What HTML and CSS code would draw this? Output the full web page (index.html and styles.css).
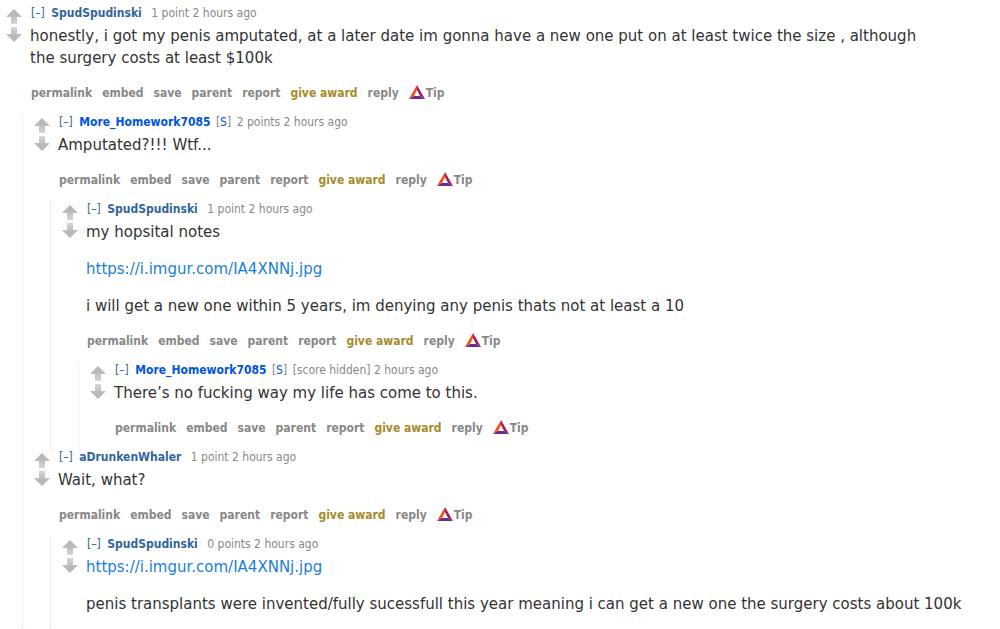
FILE: index.html
```html
<!DOCTYPE html>
<html lang="en">
<head>
    <meta charset="UTF-8">
    <meta name="viewport" content="width=device-width, initial-scale=1.0">
    <title>Comments</title>
    <link rel="stylesheet" href="styles.css">
</head>
<body>
    <svg class="defs" aria-hidden="true">
        <linearGradient id="arrow-fade" x1="0" y1="0" x2="0" y2="1">
            <stop offset="0.4" stop-color="#b8b8b8"/>
            <stop offset="1" stop-color="#d6d6d6"/>
        </linearGradient>
        <symbol id="arrow" viewBox="0 0 16 15">
            <path d="M8 0L16 8H11V15H5V8H0Z" fill="url(#arrow-fade)"/>
        </symbol>
        <symbol id="bat" viewBox="0 0 16 14">
            <path d="M8 0L0 14L5 11L8 5Z" fill="#ff4d0d"/>
            <path d="M8 0L16 14L11 11L8 5Z" fill="#9e1f63"/>
            <path d="M0 14H16L11 11H5Z" fill="#662d91"/>
        </symbol>
    </svg>

    <main class="comments">
        <article class="comment">
            <div class="votes">
                <button class="vote" aria-label="upvote"><svg><use href="#arrow"/></svg></button>
                <button class="vote down" aria-label="downvote"><svg><use href="#arrow"/></svg></button>
            </div>
            <div class="entry">
                <p class="tagline"><a href="#" class="expand">[–]</a> <a href="#" class="author">SpudSpudinski</a> <span class="score">1 point 2 hours ago</span></p>
                <div class="text">
                    <p>honestly, i got my penis amputated, at a later date im gonna have a new one put on at least twice the size , although the surgery costs at least $100k</p>
                </div>
                <nav class="buttons">
                    <a href="#">permalink</a>
                    <a href="#">embed</a>
                    <a href="#">save</a>
                    <a href="#">parent</a>
                    <a href="#">report</a>
                    <a href="#" class="award">give award</a>
                    <a href="#">reply</a>
                    <a href="#" class="tip"><svg><use href="#bat"/></svg>Tip</a>
                </nav>

                <div class="children">
                    <article class="comment">
                        <div class="votes">
                            <button class="vote" aria-label="upvote"><svg><use href="#arrow"/></svg></button>
                            <button class="vote down" aria-label="downvote"><svg><use href="#arrow"/></svg></button>
                        </div>
                        <div class="entry">
                            <p class="tagline"><a href="#" class="expand">[–]</a> <a href="#" class="author op">More_Homework7085</a> <span class="flag">[<a href="#">S</a>]</span> <span>2 points 2 hours ago</span></p>
                            <div class="text">
                                <p>Amputated?!!! Wtf...</p>
                            </div>
                            <nav class="buttons">
                                <a href="#">permalink</a>
                                <a href="#">embed</a>
                                <a href="#">save</a>
                                <a href="#">parent</a>
                                <a href="#">report</a>
                                <a href="#" class="award">give award</a>
                                <a href="#">reply</a>
                                <a href="#" class="tip"><svg><use href="#bat"/></svg>Tip</a>
                            </nav>

                            <div class="children">
                                <article class="comment">
                                    <div class="votes">
                                        <button class="vote" aria-label="upvote"><svg><use href="#arrow"/></svg></button>
                                        <button class="vote down" aria-label="downvote"><svg><use href="#arrow"/></svg></button>
                                    </div>
                                    <div class="entry">
                                        <p class="tagline"><a href="#" class="expand">[–]</a> <a href="#" class="author">SpudSpudinski</a> <span class="score">1 point 2 hours ago</span></p>
                                        <div class="text">
                                            <p>my hopsital notes</p>
                                            <p><a href="#">https://i.imgur.com/IA4XNNj.jpg</a></p>
                                            <p>i will get a new one within 5 years, im denying any penis thats not at least a 10</p>
                                        </div>
                                        <nav class="buttons">
                                            <a href="#">permalink</a>
                                            <a href="#">embed</a>
                                            <a href="#">save</a>
                                            <a href="#">parent</a>
                                            <a href="#">report</a>
                                            <a href="#" class="award">give award</a>
                                            <a href="#">reply</a>
                                            <a href="#" class="tip"><svg><use href="#bat"/></svg>Tip</a>
                                        </nav>

                                        <div class="children">
                                            <article class="comment">
                                                <div class="votes">
                                                    <button class="vote" aria-label="upvote"><svg><use href="#arrow"/></svg></button>
                                                    <button class="vote down" aria-label="downvote"><svg><use href="#arrow"/></svg></button>
                                                </div>
                                                <div class="entry">
                                                    <p class="tagline"><a href="#" class="expand">[–]</a> <a href="#" class="author op">More_Homework7085</a> <span class="flag">[<a href="#">S</a>]</span> <span>[score hidden] 2 hours ago</span></p>
                                                    <div class="text">
                                                        <p>There’s no fucking way my life has come to this.</p>
                                                    </div>
                                                    <nav class="buttons">
                                                        <a href="#">permalink</a>
                                                        <a href="#">embed</a>
                                                        <a href="#">save</a>
                                                        <a href="#">parent</a>
                                                        <a href="#">report</a>
                                                        <a href="#" class="award">give award</a>
                                                        <a href="#">reply</a>
                                                        <a href="#" class="tip"><svg><use href="#bat"/></svg>Tip</a>
                                                    </nav>
                                                </div>
                                            </article>
                                        </div>
                                    </div>
                                </article>
                            </div>
                        </div>
                    </article>

                    <article class="comment">
                        <div class="votes">
                            <button class="vote" aria-label="upvote"><svg><use href="#arrow"/></svg></button>
                            <button class="vote down" aria-label="downvote"><svg><use href="#arrow"/></svg></button>
                        </div>
                        <div class="entry">
                            <p class="tagline"><a href="#" class="expand">[–]</a> <a href="#" class="author">aDrunkenWhaler</a> <span class="score">1 point 2 hours ago</span></p>
                            <div class="text">
                                <p>Wait, what?</p>
                            </div>
                            <nav class="buttons">
                                <a href="#">permalink</a>
                                <a href="#">embed</a>
                                <a href="#">save</a>
                                <a href="#">parent</a>
                                <a href="#">report</a>
                                <a href="#" class="award">give award</a>
                                <a href="#">reply</a>
                                <a href="#" class="tip"><svg><use href="#bat"/></svg>Tip</a>
                            </nav>

                            <div class="children">
                                <article class="comment">
                                    <div class="votes">
                                        <button class="vote" aria-label="upvote"><svg><use href="#arrow"/></svg></button>
                                        <button class="vote down" aria-label="downvote"><svg><use href="#arrow"/></svg></button>
                                    </div>
                                    <div class="entry">
                                        <p class="tagline"><a href="#" class="expand">[–]</a> <a href="#" class="author">SpudSpudinski</a> <span class="score">0 points 2 hours ago</span></p>
                                        <div class="text">
                                            <p><a href="#">https://i.imgur.com/IA4XNNj.jpg</a></p>
                                            <p>penis transplants were invented/fully sucessfull this year meaning i can get a new one the surgery costs about 100k</p>
                                        </div>
                                    </div>
                                </article>
                            </div>
                        </div>
                    </article>
                </div>
            </div>
        </article>
    </main>
</body>
</html>
```
FILE: styles.css
```css
body {
    margin: 0;
    background-color: #fff;
    color: #333;
    font-family: Verdana, "DejaVu Sans", sans-serif;
    font-size: 15px;
    line-height: 22px;
}
a {
    text-decoration: none;
}
p {
    margin: 0;
}
.defs {
    position: absolute;
    width: 0;
    height: 0;
}
.comments {
    padding: 6px 20px 0 6px;
}
.comment {
    display: flex;
    gap: 8px;
}
.entry {
    flex: 1;
    min-width: 0;
}

/* vote arrows */
.votes {
    display: flex;
    flex-direction: column;
    gap: 3px;
    padding-top: 3px;
}
.vote {
    width: 16px;
    height: 15px;
    padding: 0;
    border: 0;
    background: none;
    cursor: pointer;
}
.vote svg {
    display: block;
    width: 16px;
    height: 15px;
}
.down svg {
    transform: rotate(180deg);
}

.tagline {
    padding-left: 1px;
    color: #888;
    font-family: "DejaVu Sans Condensed", "DejaVu Sans", sans-serif;
    font-size: 12px;
    line-height: 14px;
}
.expand,
.author {
    color: #369;
}
.expand {
    margin-right: 3px;
}
.author {
    font-weight: bold;
}
.op,
.flag a {
    color: #0055df;
}
.score {
    margin-left: 6px;
}
.flag {
    margin: 0 2px;
}

.text {
    padding-top: 5px;
}
.text p {
    max-width: 60em;
}
.text p + p {
    margin-top: 15px;
}
.text a {
    color: #1a7fd6;
}
.text:last-child {
    padding-bottom: 16px;
}

.buttons {
    display: flex;
    gap: 10px;
    padding: 16px 0 14px 1px;
    font-family: "DejaVu Sans Condensed", "DejaVu Sans", sans-serif;
    font-size: 12px;
    font-weight: bold;
    line-height: 16px;
}
.buttons a {
    color: #888;
}
.buttons .award {
    color: #a68b2c;
}
.tip {
    display: flex;
    gap: 1px;
}
.tip svg {
    width: 16px;
    height: 14px;
}

/* thread line sits under the parent's arrows */
.children {
    margin-left: -8px;
    padding-left: 11px;
    border-left: 1px dotted #ddf;
}
```
